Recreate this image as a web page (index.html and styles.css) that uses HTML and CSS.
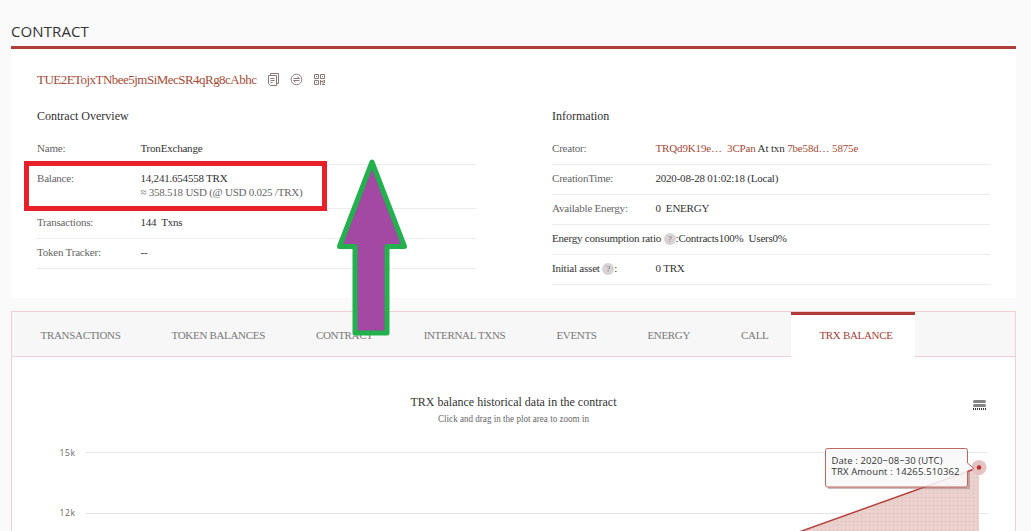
FILE: index.html
```html
<!DOCTYPE html>
<html lang="en">
<head>
<meta charset="utf-8">
<title>Contract</title>
<link rel="stylesheet" href="styles.css">
</head>
<body>
<main class="page">
  <h1 class="page-title">CONTRACT</h1>
  <section class="summary">
    <div class="address-line">
      <a class="address">TUE2ETojxTNbee5jmSiMecSR4qRg8cAbhc</a>
      <svg class="icon" viewBox="0 0 13 13"><path d="M3.500 2.500V.5h8v10H10M1.500 2.500h8v10h-6l-2-2z" /><path d="M3.500 5.500h4M3.500 7.500h4M3.500 9.500h2" /></svg>
      <svg class="icon" viewBox="0 0 13 13"><circle cx="6.500" cy="6.500" r="5.300"/><path d="M3.500 5.500h6l-2-1.700M9.500 7.500h-6l2 1.700"/></svg>
      <svg class="icon" viewBox="0 0 13 13"><path d="M1.500 1.500h4v4h-4zM7.500 1.500h4v4h-4zM1.500 7.500h4v4h-4zM3 3.500h1M9 3.500h1M3 9.500h1M7.500 7v5M8 8.500h2v3M9 11.500h3M11.500 7v3M9.500 7.500h1"/></svg>
    </div>
    <div class="columns">
      <div class="column">
        <h2 class="subtitle">Contract Overview</h2>
        <dl class="row"><dt>Name:</dt><dd>TronExchange</dd></dl>
        <dl class="row row-tall"><dt>Balance:</dt><dd>14,241.654558 TRX<br><span class="muted">≈ 358.518 USD (@ USD 0.025 /TRX)</span></dd><i class="highlight"></i></dl>
        <dl class="row"><dt>Transactions:</dt><dd>144&nbsp; Txns</dd></dl>
        <dl class="row"><dt>Token Tracker:</dt><dd>--</dd></dl>
      </div>
      <div class="column">
        <h2 class="subtitle">Information</h2>
        <dl class="row"><dt>Creator:</dt><dd class="creator"><a>TRQd9K19e…&nbsp; 3CPan</a> At txn <a>7be58d… 5875e</a></dd></dl>
        <dl class="row"><dt>CreationTime:</dt><dd>2020-08-28 01:02:18 (Local)</dd></dl>
        <dl class="row"><dt>Available Energy:</dt><dd>0&nbsp; ENERGY</dd></dl>
        <dl class="row"><dt class="dark wide">Energy consumption ratio <b class="help">?</b>:Contracts100%&nbsp; Users0%</dt></dl>
        <dl class="row"><dt class="dark">Initial asset <b class="help">?</b>:</dt><dd>0 TRX</dd></dl>
      </div>
    </div>
    <svg class="arrow" viewBox="0 0 72 180"><path d="M35 4L67.500 88.500H50V175H18V88.500H2.500z"/></svg>
  </section>
  <section class="details">
    <nav class="tabs">
      <a class="tab transactions">TRANSACTIONS</a>
      <a class="tab tokens">TOKEN BALANCES</a>
      <a class="tab contract">CONTRACT</a>
      <a class="tab internal">INTERNAL TXNS</a>
      <a class="tab events">EVENTS</a>
      <a class="tab energy">ENERGY</a>
      <a class="tab call">CALL</a>
      <a class="tab active">TRX BALANCE</a>
    </nav>
    <svg class="chart" viewBox="12 357 1003 174">
      <defs>
        <pattern id="dots" width="4" height="4" patternUnits="userSpaceOnUse"><rect width="4" height="4" fill="#ebd1cd"/><rect x="1" y="1" width="1" height="1" fill="#dfb5b2"/></pattern>
      </defs>
      <text class="chart-title" x="410.500" y="406" textLength="206">TRX balance historical data in the contract</text>
      <text class="chart-hint" x="438" y="422" textLength="151" lengthAdjust="spacingAndGlyphs">Click and drag in the plot area to zoom in</text>
      <path class="menu" d="M974.500 401.500h10M974.500 405.500h10"/><path class="menu-shade" d="M973 409h13"/>
      <path class="grid" d="M86 452.500H988M86 513.500H988"/>
      <text class="axis" x="59.500" y="456" textLength="15.500">15k</text>
      <text class="axis" x="59.500" y="516" textLength="15.500">12k</text>
      <path fill="url(#dots)" d="M799 532L979 467.500V532z"/>
      <path class="series" d="M799 532L979 467.500"/>
      <circle cx="979" cy="467.500" r="7.500" fill="#e5c3c5"/>
      <path class="tip-shadow" d="M828 488H969V471.500"/>
      <path class="tip" d="M827.500 448.500H965.500Q967.500 448.500 967.500 450.500V463L974 468.500L967.500 471V485Q967.500 487 965.500 487H827.500Q825.500 487 825.500 485V450.500Q825.500 448.500 827.500 448.500z"/>
      <circle cx="979" cy="467.500" r="2.300" fill="#ba302d"/>
      <text class="tip-text" x="831.500" y="464" textLength="111">Date : 2020−08−30 (UTC)</text>
      <text class="tip-text" x="831.500" y="475" textLength="128">TRX Amount : 14265.510362</text>
    </svg>
  </section>
</main>
</body>
</html>
```
FILE: styles.css
```css
* { box-sizing: border-box; }
body { margin: 0; background: #fafafa; overflow: hidden; font: 11px/14px "Liberation Serif", serif; color: #333; }
.page { width: 1005px; height: 531px; margin-left: 11px; overflow: hidden; }
.page-title { height: 49px; margin: 0; padding-top: 21px; border-bottom: 3px solid #b13d38; font: 400 15px/20px "Open Sans", sans-serif; letter-spacing: .1px; }
.summary { position: relative; height: 249px; padding: 21px 26px 0; background: #fff; }
a { color: #a84a35; }
.address-line { display: flex; align-items: center; height: 19px; }
.address { width: 230px; font-size: 13px; letter-spacing: -.53px; white-space: nowrap; }
.icon { width: 13px; height: 13px; margin-right: 10px; fill: none; stroke: #8e7779; stroke-width: 1; }
.columns { display: grid; grid-template-columns: 439px 438px; column-gap: 76px; }
.subtitle { height: 46px; margin: 0; padding-top: 19px; font-size: 12px; font-weight: 400; line-height: 16px; }
.row { position: relative; display: flex; height: 30px; margin: 0; padding-top: 6px; border-bottom: 1px solid #ececec; letter-spacing: -.21px; white-space: nowrap; }
.row-tall { height: 44px; }
dt { width: 103.500px; color: #656565; }
dd { margin: 0; }
.creator { letter-spacing: -.15px; }
.dark { color: #333; }
.muted { color: #666; letter-spacing: -.24px; }
.wide { width: auto; }
.help { display: inline-block; position: relative; top: -1px; width: 12px; height: 12px; margin-top: -1px; border-radius: 50%; background: #d9d3d5; color: #85777b; font-size: 9px; font-weight: 400; line-height: 12px; text-align: center; vertical-align: -1px; }
.highlight { position: absolute; left: -13px; top: -4px; width: 303px; height: 50px; border: 5px solid #e82029; z-index: 1; }
.arrow { position: absolute; left: 326px; top: 109px; width: 72px; height: 180px; z-index: 3; }
.arrow path { fill: #a349a4; stroke: #22b14c; stroke-width: 5; stroke-linejoin: round; }
.details { height: 240px; margin-top: 13px; border: 1px solid #efcfd3; background: #fff; }
.tabs { display: flex; height: 45px; padding-left: 3px; border-bottom: 1px solid #efcfd3; background: #f7f7f7; }
.tab { flex: none; padding-top: 15px; color: #777; text-align: center; line-height: 16px; letter-spacing: -.32px; white-space: nowrap; }
.transactions { width: 131px; }
.tokens { width: 144.500px; }
.contract { width: 107.500px; }
.internal { width: 133px; }
.events { width: 91px; }
.energy { width: 93.500px; }
.call { width: 78.500px; }
.active { width: 124px; height: 45px; margin-left: -3px; padding-top: 12px; padding-left: 6px; border-top: 3px solid #b13d38; background: #fff; color: #a84035; }
.chart { display: block; width: 1003px; height: 174px; }
.chart-title { font-size: 12px; fill: #333; }
.chart-hint { font-size: 9.500px; fill: #666; }
.menu { stroke: #858585; stroke-width: 3; stroke-linecap: round; }
.menu-shade { stroke: #333; stroke-width: 2; stroke-dasharray: 1 1; }
.grid { stroke: #e6e6e6; }
.axis { font: 8.500px "Open Sans", sans-serif; fill: #666; }
.series { fill: none; stroke: #b6423d; stroke-width: 1.500; }
.tip-shadow { fill: none; stroke: #9b7777; stroke-width: 2; opacity: .5; }
.tip { fill: #f8f8f8; fill-opacity: .88; stroke: #be685f; }
.tip-text { font: 9.500px "Open Sans", sans-serif; fill: #333; }
```
